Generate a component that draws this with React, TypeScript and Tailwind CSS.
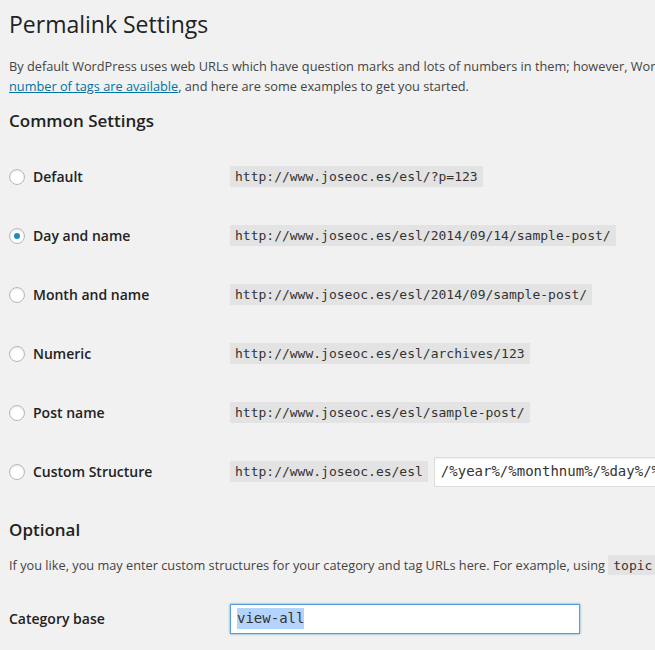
const rows = [
  { label: 'Default', url: 'http://www.joseoc.es/esl/?p=123' },
  { label: 'Day and name', url: 'http://www.joseoc.es/esl/2014/09/14/sample-post/', checked: true },
  { label: 'Month and name', url: 'http://www.joseoc.es/esl/2014/09/sample-post/' },
  { label: 'Numeric', url: 'http://www.joseoc.es/esl/archives/123' },
  { label: 'Post name', url: 'http://www.joseoc.es/esl/sample-post/' },
];

const mono = "font-['DejaVu_Sans_Mono',monospace]";

function Radio({ checked }: { checked?: boolean }) {
  return (
    <span className="flex h-4 w-4 shrink-0 items-center justify-center rounded-full border border-[#b4b9be] bg-white shadow-[inset_0_1px_2px_rgba(0,0,0,0.1)]">
      {checked && <span className="h-[6px] w-[6px] rounded-full bg-[#1e8cbe]" />}
    </span>
  );
}

function Code({ children }: { children: string }) {
  return (
    <code className={`${mono} whitespace-nowrap bg-[#e3e3e3] px-[5px] pb-[2px] pt-[3px] text-[13px] leading-4 text-[#333]`}>
      {children}
    </code>
  );
}

export default function App() {
  return (
    <div className="h-[650px] w-[655px] overflow-hidden bg-[#f1f1f1] font-['Open_Sans',sans-serif] text-[#444]">
      <div className="w-[1200px] pl-[9px]">
        <h1 className="pt-[10px] text-[23px] leading-[29px] text-[#222]">Permalink Settings</h1>

        <div className="mt-[17px] whitespace-nowrap text-[12.75px] leading-5">
          <p>
            By default WordPress uses web URLs which have question marks and lots of numbers in them; however, WordPress offers you the ability to create a custom URL structure for your permalinks and archives. A
          </p>
          <p>
            <a className="text-[#0074a2] underline">number of tags are available</a>, and here are some examples to get you started.
          </p>
        </div>

        <h3 className="mt-[14px] text-[17px] font-semibold leading-[22px] text-[#222]">Common Settings</h3>

        <div className="mt-[15px]">
          {rows.map((row) => (
            <div key={row.label} className="flex h-[59px] items-center">
              <div className="flex w-[221px] items-center gap-2">
                <Radio checked={row.checked} />
                <span className="text-[14px] font-semibold text-[#222]">{row.label}</span>
              </div>
              <Code>{row.url}</Code>
            </div>
          ))}
          <div className="flex h-[59px] items-center">
            <div className="flex w-[221px] items-center gap-2">
              <Radio />
              <span className="text-[14px] font-semibold text-[#222]">Custom Structure</span>
            </div>
            <Code>http://www.joseoc.es/esl</Code>
            <div className={`${mono} ml-[6px] flex h-[30px] w-[350px] items-center border border-[#ddd] bg-white px-[6px] text-[14px] text-[#333] shadow-[inset_0_1px_2px_rgba(0,0,0,0.07)]`}>
              /%year%/%monthnum%/%day%/%postname%/
            </div>
          </div>
        </div>

        <h3 className="mt-[18px] text-[17px] font-semibold leading-[22px] text-[#222]">Optional</h3>

        <p className="mt-[14px] whitespace-nowrap text-[12.75px] leading-5">
          If you like, you may enter custom structures for your category and tag URLs here. For example, using <Code>topic</Code> as your category base would make your category links like
        </p>

        <div className="mt-[14px] flex h-[59px] items-center">
          <div className="w-[221px] text-[14px] font-semibold text-[#222]">Category base</div>
          <div className={`${mono} flex h-[30px] w-[350px] items-center border border-[#5b9dd9] bg-white px-[6px] text-[14px] text-[#333] shadow-[0_0_2px_rgba(30,140,190,0.8)]`}>
            <span className="bg-[#b3d4fc]">view-all</span>
          </div>
        </div>
      </div>
    </div>
  );
}
